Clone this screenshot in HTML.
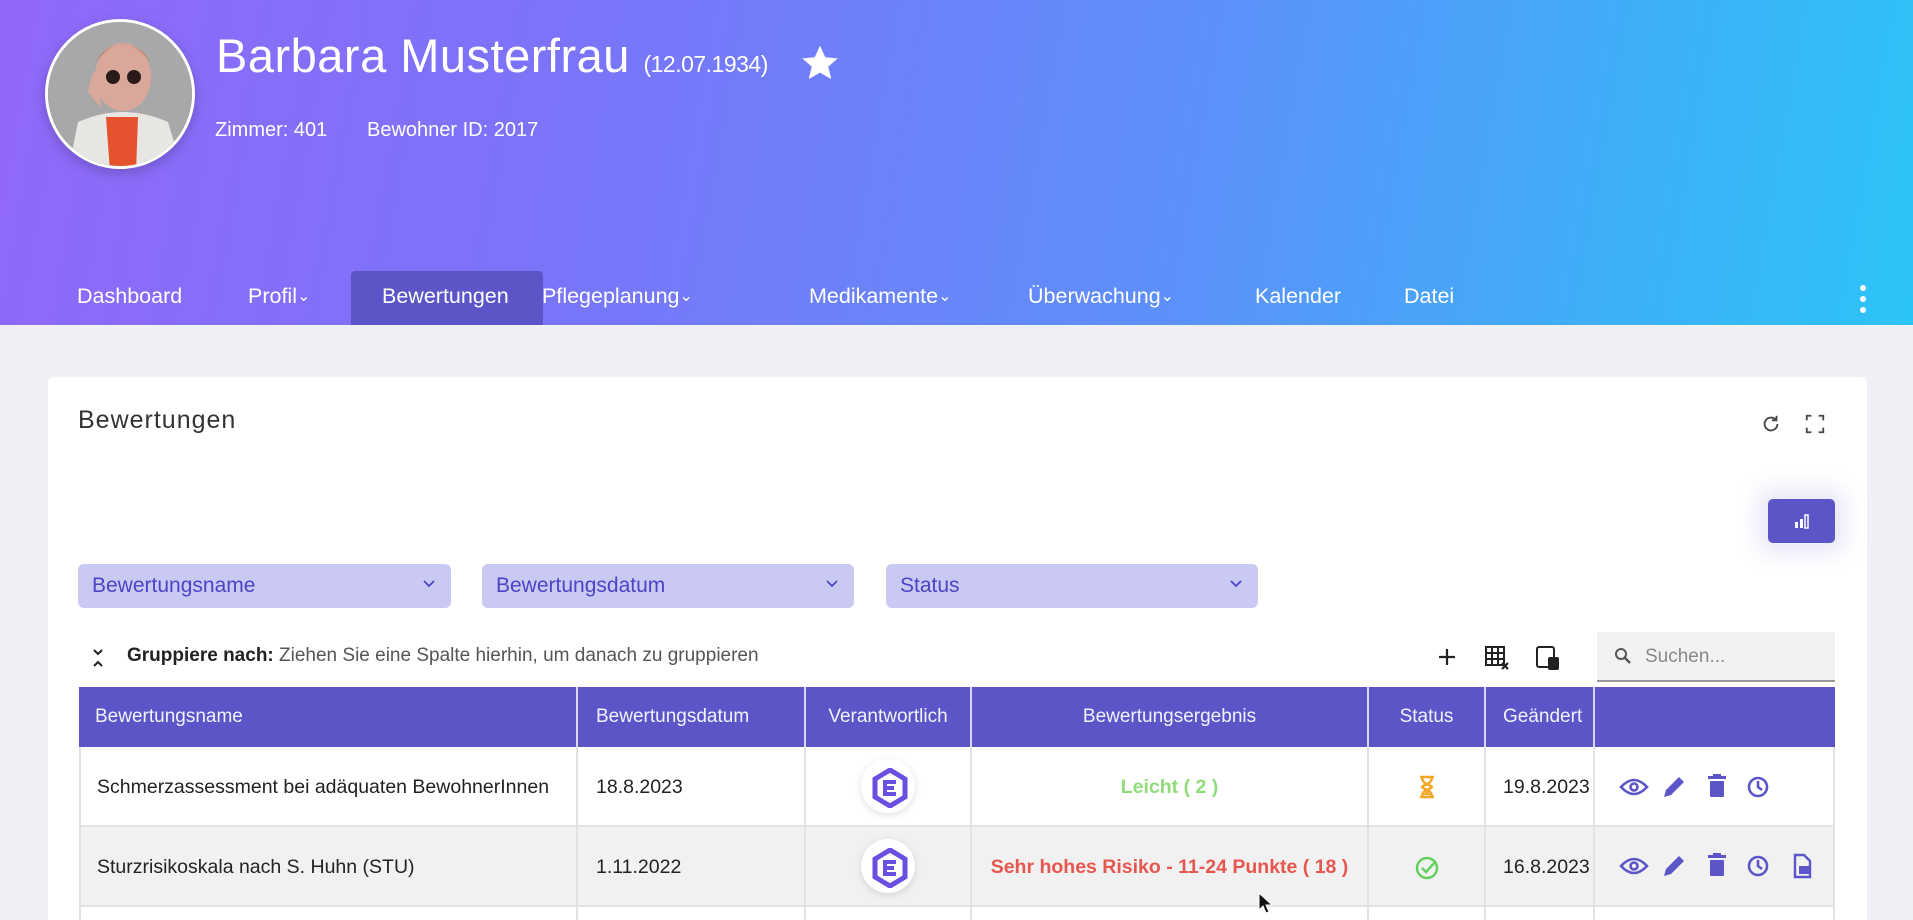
<!DOCTYPE html>
<html><head><meta charset="utf-8">
<style>
*{box-sizing:border-box;margin:0;padding:0}
html,body{width:1913px;height:920px;overflow:hidden}
body{background:#eef0f5;font-family:"Liberation Sans",sans-serif;color:#222}
#w{position:relative;width:1913px;height:920px;overflow:hidden}
.hdr{position:absolute;left:0;top:0;width:1913px;height:325px;background:linear-gradient(100deg,#9168f8 0%,#7a74f9 30%,#5f8ef9 60%,#41acf9 82%,#2cc4f8 100%)}
.av{position:absolute;left:45px;top:19px;width:150px;height:150px;border-radius:50%;border:3px solid #fff;overflow:hidden;background:#9a9a9a;box-shadow:0 4px 12px rgba(0,0,0,.2)}
.name{position:absolute;left:216px;top:28px;color:#fff;font-size:47px;letter-spacing:.5px}
.name small{font-size:23px;letter-spacing:-.5px}
.star{position:absolute;left:800px;top:44px}
.meta{position:absolute;top:119px;color:#fff;font-size:20px}
.tab{position:absolute;top:284px;color:#fff;font-size:21.5px}
.tab i{font-style:normal;font-size:16px;vertical-align:2px}
.act{position:absolute;left:351px;top:271px;width:192px;height:54px;background:#5b55c8;border-radius:4px 4px 0 0}
.card{position:absolute;left:48px;top:377px;width:1819px;height:543px;background:#fff;border-radius:6px 6px 0 0}
.dd{position:absolute;top:564px;height:44px;background:#c9c9f3;border-radius:6px;color:#4c44c4;font-size:21px;padding:10px 14px}
.dd svg{position:absolute;right:16px;top:16px}
.th{position:absolute;top:687px;height:60px;background:#5b55c8;color:#f2f2ff;font-size:19px;line-height:60px;border-right:2px solid #d8d8ef}
.td{position:absolute;height:80px;line-height:80px;font-size:19.5px;color:#222;border-right:2px solid #e2e2e2;border-bottom:2px solid #e2e2e2;white-space:nowrap;overflow:hidden}
.l{height:13px;border-bottom:none}
.r2{background:#f1f1f1}
.logo{position:absolute;left:50%;top:50%;transform:translate(-50%,-50%);width:54px;height:54px;border-radius:50%;background:#fff;box-shadow:0 2px 8px rgba(0,0,0,.12)}
</style></head><body><div id="w">
<div class="hdr"></div>
<div class="av"><svg width="150" height="150" viewBox="0 0 150 150"><rect width="150" height="150" fill="#a8a8a8"/><path d="M20 150 L30 100 Q75 80 120 100 L135 150Z" fill="#e8e6e2"/><path d="M58 95 L90 95 L88 150 L62 150Z" fill="#e4532e"/><ellipse cx="75" cy="55" rx="28" ry="34" fill="#d9a89a"/><path d="M48 40 Q75 5 102 40 Q95 25 75 22 Q55 25 48 40Z" fill="#c9806a"/><circle cx="65" cy="55" r="7" fill="#2a1a1a"/><circle cx="86" cy="55" r="7" fill="#2a1a1a"/><path d="M40 70 Q45 40 55 50 L52 85Z" fill="#d8a89a"/></svg></div>
<div class="name">Barbara Musterfrau <small>(12.07.1934)</small></div>
<svg class="star" width="40" height="38" viewBox="0 0 24 23"><path d="M12 1l3.2 7 7.6.7-5.8 5 1.8 7.5L12 17.3 5.2 21.2 7 13.7l-5.8-5 7.6-.7z" fill="#fff"/></svg>
<div class="meta" style="left:215px">Zimmer: 401</div>
<div class="meta" style="left:367px">Bewohner ID: 2017</div>
<div class="act"></div>
<div class="tab" style="left:77px">Dashboard</div>
<div class="tab" style="left:248px">Profil<i>⌄</i></div>
<div class="tab" style="left:382px">Bewertungen</div>
<div class="tab" style="left:542px">Pflegeplanung<i>⌄</i></div>
<div class="tab" style="left:809px">Medikamente<i>⌄</i></div>
<div class="tab" style="left:1028px">Überwachung<i>⌄</i></div>
<div class="tab" style="left:1255px">Kalender</div>
<div class="tab" style="left:1404px">Datei</div>
<svg style="position:absolute;left:1857px;top:283px" width="12" height="32"><circle cx="6" cy="5" r="3" fill="#fff"/><circle cx="6" cy="16" r="3" fill="#fff"/><circle cx="6" cy="27" r="3" fill="#fff"/></svg>

<div class="card"></div>
<div style="position:absolute;left:78px;top:406px;font-size:25px;color:#333;letter-spacing:1px">Bewertungen</div>
<svg style="position:absolute;left:1760px;top:413px" width="22" height="22" viewBox="0 0 24 24"><path d="M19 12a7 7 0 1 1-2.1-5" fill="none" stroke="#444" stroke-width="2"/><path d="M18 3v5h-5" fill="none" stroke="#444" stroke-width="2"/></svg>
<svg style="position:absolute;left:1804px;top:413px" width="22" height="22" viewBox="0 0 24 24" fill="none" stroke="#444" stroke-width="2"><path d="M3 8V3h5M16 3h5v5M21 16v5h-5M8 21H3v-5"/></svg>
<div style="position:absolute;left:1768px;top:499px;width:67px;height:44px;background:#5b55c8;border-radius:5px;box-shadow:0 0 22px 10px rgba(120,120,220,.18)"><svg style="position:absolute;left:26px;top:14px" width="16" height="16"><rect x="1" y="9" width="3" height="6" fill="#fff"/><rect x="6" y="6" width="3" height="9" fill="#fff"/><rect x="11" y="2" width="3" height="13" fill="none" stroke="#fff" stroke-width="1.5"/></svg></div>

<div class="dd" style="left:78px;width:373px">Bewertungsname<svg width="12" height="8"><path d="M1 1l5 5 5-5" fill="none" stroke="#4c44c4" stroke-width="1.8"/></svg></div>
<div class="dd" style="left:482px;width:372px">Bewertungsdatum<svg width="12" height="8"><path d="M1 1l5 5 5-5" fill="none" stroke="#4c44c4" stroke-width="1.8"/></svg></div>
<div class="dd" style="left:886px;width:372px">Status<svg width="12" height="8"><path d="M1 1l5 5 5-5" fill="none" stroke="#4c44c4" stroke-width="1.8"/></svg></div>

<svg style="position:absolute;left:92px;top:648px" width="12" height="20"><path d="M2 2l4 4 4-4M2 18l4-4 4 4" fill="none" stroke="#222" stroke-width="2"/></svg>
<div style="position:absolute;left:127px;top:645px;font-size:19px;color:#555"><b style="color:#222">Gruppiere nach:</b> Ziehen Sie eine Spalte hierhin, um danach zu gruppieren</div>
<svg style="position:absolute;left:1437px;top:647px" width="20" height="20"><path d="M10 2v16M2 10h16" stroke="#222" stroke-width="2.2"/></svg>
<svg style="position:absolute;left:1484px;top:645px" width="26" height="26" viewBox="0 0 26 26" fill="none" stroke="#222" stroke-width="2"><rect x="2" y="2" width="18" height="18"/><path d="M2 8h18M2 14h18M8 2v18M14 2v18"/><path d="M18 18l6 6M24 18l-6 6" stroke-width="2.2"/></svg>
<svg style="position:absolute;left:1535px;top:645px" width="26" height="26" viewBox="0 0 26 26" fill="none" stroke="#222" stroke-width="2"><rect x="2" y="2" width="17" height="20" rx="2"/><rect x="14" y="13" width="9" height="11" rx="1" fill="#222"/></svg>
<div style="position:absolute;left:1597px;top:632px;width:238px;height:50px;background:#f2f2f2;border-bottom:2px solid #999"><svg style="position:absolute;left:17px;top:15px" width="18" height="18" viewBox="0 0 18 18"><circle cx="7" cy="7" r="5" fill="none" stroke="#555" stroke-width="2"/><path d="M11 11l5 5" stroke="#555" stroke-width="2.4"/></svg><span style="position:absolute;left:48px;top:14px;font-size:19px;color:#888">Suchen...</span></div>

<div class="th" style="left:79px;width:499px;padding-left:16px">Bewertungsname</div>
<div class="th" style="left:578px;width:228px;padding-left:18px">Bewertungsdatum</div>
<div class="th" style="left:806px;width:166px;text-align:center">Verantwortlich</div>
<div class="th" style="left:972px;width:397px;text-align:center">Bewertungsergebnis</div>
<div class="th" style="left:1369px;width:117px;text-align:center">Status</div>
<div class="th" style="left:1486px;width:109px;padding-left:17px;overflow:hidden;white-space:nowrap">Geändert</div>
<div class="th" style="left:1595px;width:240px;border-right:none"></div>

<div class="td" style="top:747px;left:79px;width:499px;padding-left:16px;border-left:2px solid #e2e2e2">Schmerzassessment bei adäquaten BewohnerInnen</div>
<div class="td" style="top:747px;left:578px;width:228px;padding-left:18px">18.8.2023</div>
<div class="td" style="top:747px;left:806px;width:166px"><div class="logo"></div><svg style="position:absolute;left:66px;top:21px" width="36" height="40" viewBox="0 0 36 40"><path d="M18 2L33 11V29L18 38L3 29V11Z" fill="none" stroke="#6a4fe0" stroke-width="5"/><path d="M24 14H13v12h11M13 20h9" fill="none" stroke="#6a4fe0" stroke-width="4"/></svg></div>
<div class="td" style="top:747px;left:972px;width:397px;text-align:center;color:#8fdc7a;font-weight:bold">Leicht ( 2 )</div>
<div class="td" style="top:747px;left:1369px;width:117px"><svg style="position:absolute;left:49px;top:28px" width="18" height="24" viewBox="0 0 18 24"><path d="M2 2h14M2 22h14M4 2c0 8 10 8 10 10S4 14 4 22M14 2c0 8-10 8-10 10s10 2 10 10" fill="none" stroke="#f5a623" stroke-width="2.4"/><path d="M5 20l4-4 4 4z" fill="#f5a623"/></svg></div>
<div class="td" style="top:747px;left:1486px;width:109px;padding-left:17px">19.8.2023</div>
<div class="td" style="top:747px;left:1595px;width:240px"></div>

<div class="td r2" style="top:827px;left:79px;width:499px;padding-left:16px;border-left:2px solid #e2e2e2">Sturzrisikoskala nach S. Huhn (STU)</div>
<div class="td r2" style="top:827px;left:578px;width:228px;padding-left:18px">1.11.2022</div>
<div class="td r2" style="top:827px;left:806px;width:166px"><div class="logo"></div><svg style="position:absolute;left:66px;top:21px" width="36" height="40" viewBox="0 0 36 40"><path d="M18 2L33 11V29L18 38L3 29V11Z" fill="none" stroke="#6a4fe0" stroke-width="5"/><path d="M24 14H13v12h11M13 20h9" fill="none" stroke="#6a4fe0" stroke-width="4"/></svg></div>
<div class="td r2" style="top:827px;left:972px;width:397px;text-align:center;color:#e8574f;font-weight:bold">Sehr hohes Risiko - 11-24 Punkte ( 18 )</div>
<div class="td r2" style="top:827px;left:1369px;width:117px"><svg style="position:absolute;left:45px;top:28px" width="26" height="26" viewBox="0 0 26 26"><circle cx="13" cy="13" r="10" fill="none" stroke="#5fd05a" stroke-width="2.4"/><path d="M8 13l4 4 10-11" fill="none" stroke="#5fd05a" stroke-width="2.4"/></svg></div>
<div class="td r2" style="top:827px;left:1486px;width:109px;padding-left:17px">16.8.2023</div>
<div class="td r2" style="top:827px;left:1595px;width:240px"></div>

<div class="td l" style="top:907px;left:79px;width:499px;border-left:2px solid #e2e2e2"></div>
<div class="td l" style="top:907px;left:578px;width:228px"></div>
<div class="td l" style="top:907px;left:806px;width:166px"></div>
<div class="td l" style="top:907px;left:972px;width:397px"></div>
<div class="td l" style="top:907px;left:1369px;width:117px"></div>
<div class="td l" style="top:907px;left:1486px;width:109px"></div>
<div class="td l" style="top:907px;left:1595px;width:240px"></div>

<svg style="position:absolute;left:0;top:0" width="1913" height="920">
<g fill="none" stroke="#5b55c8" stroke-width="2.6">
<path d="M1621 787q13-14 26 0q-13 14-26 0z"/><circle cx="1634" cy="787" r="3.5"/>
<path d="M1621 866q13-14 26 0q-13 14-26 0z"/><circle cx="1634" cy="866" r="3.5"/>
<circle cx="1758" cy="787" r="9"/><path d="M1758 781v6l4 3"/>
<circle cx="1758" cy="866" r="9"/><path d="M1758 860v6l4 3"/>
</g>
<g fill="#5b55c8">
<path d="M1664 797l2-7 13-13 5 5-13 13z"/><path d="M1664 876l2-7 13-13 5 5-13 13z"/>
<rect x="1710" y="781" width="14" height="16" rx="1"/><rect x="1708" y="776" width="18" height="3"/><rect x="1713" y="774" width="8" height="3"/>
<rect x="1710" y="860" width="14" height="16" rx="1"/><rect x="1708" y="855" width="18" height="3"/><rect x="1713" y="853" width="8" height="3"/>
<path d="M1795 855h9l6 6v16h-15z" fill="none" stroke="#5b55c8" stroke-width="2.4"/><rect x="1799" y="866" width="10" height="8"/>
</g>
</svg>
<svg style="position:absolute;left:1258px;top:892px" width="16" height="22" viewBox="0 0 16 22"><path d="M1 1v17l4-4 3 7 3-1-3-7h6z" fill="#111" stroke="#fff" stroke-width="1"/></svg>
</div></body></html>
